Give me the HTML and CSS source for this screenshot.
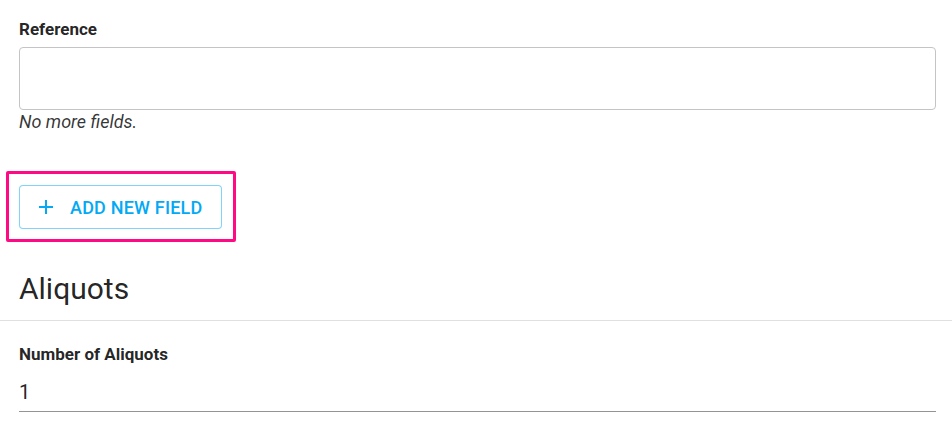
FILE: index.html
```html
<!DOCTYPE html>
<html lang="en">
<head>
    <meta charset="UTF-8">
    <meta name="viewport" content="width=device-width, initial-scale=1.0">
    <title>Sample Fields</title>
    <link rel="stylesheet" href="styles.css">
</head>
<body>

    <!-- Extra fields -->
    <div class="section">
        <label class="field-label" for="reference">Reference</label>
        <textarea id="reference" class="text-box"></textarea>
        <p class="hint">No more fields.</p>

        <div class="highlight">
            <button class="add-button">
                <svg class="plus" width="14" height="14" viewBox="0 0 14 14">
                    <path d="M7 0v14M0 7h14" stroke="currentColor" stroke-width="2"/>
                </svg>
                <span>Add new field</span>
            </button>
        </div>
    </div>

    <!-- Aliquots -->
    <div class="section-header">
        <h2>Aliquots</h2>
    </div>
    <div class="section">
        <label class="field-label label-aliquots" for="aliquots">Number of Aliquots</label>
        <input type="text" id="aliquots" class="line-input" value="1">
    </div>

</body>
</html>
```

FILE: styles.css
```css
body {
    font-family: Roboto, "Noto Sans", Arial, sans-serif;
    background-color: #fff;
    color: rgba(0, 0, 0, 0.87);
    margin: 0;
}

.section {
    padding: 0 16px 0 19px;
}

.field-label {
    display: block;
    font-size: 17px;
    font-weight: bold;
    line-height: 20px;
    padding-top: 19px;
}

.text-box {
    display: block;
    box-sizing: border-box;
    width: 100%;
    height: 63px;
    margin-top: 8px;
    border: 1px solid #c4c4c4;
    border-radius: 4px;
    resize: none;
    font-family: inherit;
    font-size: 16px;
}

.hint {
    margin: 1px 0 0;
    font-size: 18px;
    line-height: 21px;
    font-style: italic;
    color: rgba(0, 0, 0, 0.8);
}

/* Annotation around the button */
.highlight {
    display: inline-block;
    margin: 39px 0 0 -13px;
    padding: 11px 11px 10px 10px;
    border: 3px solid #ff0a84;
    border-radius: 2px;
}

.add-button {
    display: flex;
    align-items: center;
    box-sizing: border-box;
    width: 203px;
    height: 44px;
    padding: 0 0 0 19px;
    background: #fff;
    border: 1px solid rgba(3, 169, 244, 0.5);
    border-radius: 4px;
    color: #03a9f4;
    font-family: inherit;
    font-size: 18px;
    font-weight: 500;
    letter-spacing: 0.2px;
    text-transform: uppercase;
    cursor: pointer;
}

.plus {
    margin-right: 17px;
}

.section-header {
    margin-top: 29px;
    padding: 0 16px 13px 19px;
    border-bottom: 1px solid #e0e0e0;
}

.section-header h2 {
    margin: 0;
    font-size: 30px;
    font-weight: 400;
    line-height: 36px;
}

.label-aliquots {
    padding-top: 23px;
}

.line-input {
    display: block;
    box-sizing: border-box;
    width: 100%;
    margin-top: 16px;
    padding: 0 0 7px 0;
    border: none;
    border-bottom: 1px solid #949494;
    font-family: inherit;
    font-size: 20px;
    line-height: 24px;
    color: rgba(0, 0, 0, 0.87);
    outline: none;
}
```
